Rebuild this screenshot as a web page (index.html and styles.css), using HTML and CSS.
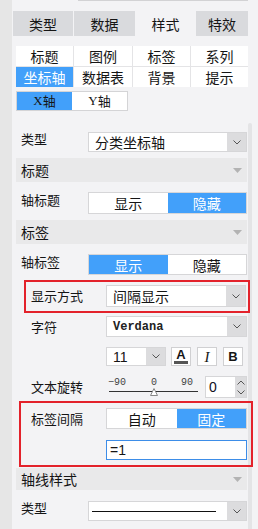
FILE: index.html
```html
<!DOCTYPE html>
<html>
<head>
    <meta charset="UTF-8">
    <title>样式</title>
    <link rel="stylesheet" href="styles.css">
</head>
<body>
<div class="app">
    <div class="side"></div>
    <div class="panel">
        <div class="scrollbar"></div>
        <div class="topline"></div>

        <div class="tabs">
            <div class="tab">类型</div>
            <div class="tab">数据</div>
            <div class="tab active">样式</div>
            <div class="tab">特效</div>
        </div>

        <div class="subtabs">
            <div class="sub">标题</div>
            <div class="sub">图例</div>
            <div class="sub">标签</div>
            <div class="sub">系列</div>
            <div class="sub on">坐标轴</div>
            <div class="sub">数据表</div>
            <div class="sub">背景</div>
            <div class="sub">提示</div>
        </div>

        <div class="axis">
            <div class="seg on"><span class="lat">X</span>轴</div>
            <div class="seg"><span class="lat">Y</span>轴</div>
        </div>

        <div class="row r-type">
            <div class="label">类型</div>
            <div class="select">
                <div class="val">分类坐标轴</div>
                <div class="arr"><svg width="8" height="5" viewBox="0 0 8 5"><path d="M0.5 0.5 L4 4 L7.5 0.5" fill="none" stroke="#555" stroke-width="1"/></svg></div>
            </div>
        </div>

        <div class="sec s-title">
            <span>标题</span>
            <svg width="9" height="5" viewBox="0 0 9 5"><path d="M0 0 H9 L4.5 5 Z" fill="#b3b3b3"/></svg>
        </div>

        <div class="row r-axtitle">
            <div class="label">轴标题</div>
            <div class="toggle">
                <div>显示</div>
                <div class="on">隐藏</div>
            </div>
        </div>

        <div class="sec s-label">
            <span>标签</span>
            <svg width="9" height="5" viewBox="0 0 9 5"><path d="M0 0 H9 L4.5 5 Z" fill="#b3b3b3"/></svg>
        </div>

        <div class="row r-axlabel">
            <div class="label">轴标签</div>
            <div class="toggle">
                <div class="on">显示</div>
                <div>隐藏</div>
            </div>
        </div>

        <div class="mark mark-1">
            <div class="row ind">
                <div class="label">显示方式</div>
                <div class="select">
                    <div class="val">间隔显示</div>
                    <div class="arr"><svg width="8" height="5" viewBox="0 0 8 5"><path d="M0.5 0.5 L4 4 L7.5 0.5" fill="none" stroke="#555" stroke-width="1"/></svg></div>
                </div>
            </div>
        </div>

        <div class="row ind out r-font">
            <div class="label">字符</div>
            <div class="select">
                <div class="val mono">Verdana</div>
                <div class="arr"><svg width="8" height="5" viewBox="0 0 8 5"><path d="M0.5 0.5 L4 4 L7.5 0.5" fill="none" stroke="#555" stroke-width="1"/></svg></div>
            </div>
        </div>

        <div class="fontrow">
            <div class="select size">
                <div class="val lat2">11</div>
                <div class="arr"><svg width="8" height="5" viewBox="0 0 8 5"><path d="M0.5 0.5 L4 4 L7.5 0.5" fill="none" stroke="#555" stroke-width="1"/></svg></div>
            </div>
            <div class="btn b-color"><span>A</span><i class="bar"></i></div>
            <div class="btn b-italic">I</div>
            <div class="btn b-bold">B</div>
        </div>

        <div class="row ind out r-rotate">
            <div class="label">文本旋转</div>
            <svg class="slider" width="95" height="22" viewBox="0 0 95 22">
                <text x="2" y="9" class="tick">−90</text>
                <text x="45" y="9" class="tick">0</text>
                <text x="75" y="9" class="tick">90</text>
                <line x1="3" y1="15.5" x2="92" y2="15.5" stroke="#333" stroke-width="1"/>
                <path d="M44.5 19.5 L48 12.5 L51.5 19.5 Z" fill="#fff" stroke="#888" stroke-width="1"/>
            </svg>
            <div class="spin">
                <div class="num">0</div>
                <div class="arrows">
                    <svg width="8" height="5" viewBox="0 0 8 5"><path d="M0.5 4.5 L4 1 L7.5 4.5" fill="none" stroke="#555" stroke-width="1"/></svg>
                    <svg width="8" height="5" viewBox="0 0 8 5"><path d="M0.5 0.5 L4 4 L7.5 0.5" fill="none" stroke="#555" stroke-width="1"/></svg>
                </div>
            </div>
        </div>

        <div class="mark mark-2">
            <div class="row ind">
                <div class="label">标签间隔</div>
                <div class="toggle">
                    <div>自动</div>
                    <div class="on">固定</div>
                </div>
            </div>
            <div class="formula">=1</div>
        </div>

        <div class="sec s-line">
            <span>轴线样式</span>
            <svg width="9" height="5" viewBox="0 0 9 5"><path d="M0 0 H9 L4.5 5 Z" fill="#b3b3b3"/></svg>
        </div>

        <div class="row r-linetype">
            <div class="label">类型</div>
            <div class="select">
                <div class="val"><i class="solid"></i></div>
                <div class="arr"><svg width="8" height="5" viewBox="0 0 8 5"><path d="M0.5 0.5 L4 4 L7.5 0.5" fill="none" stroke="#555" stroke-width="1"/></svg></div>
            </div>
        </div>
    </div>
</div>
</body>
</html>
```

FILE: styles.css
```css
* {
    box-sizing: border-box;
}
body {
    margin: 0;
    width: 258px;
    height: 529px;
    overflow: hidden;
    background: #f3f3f5;
    font-family: "Noto Sans CJK SC", "Noto Sans", sans-serif;
    font-size: 13px;
    line-height: 16px;
    color: #151515;
}
.app {
    display: flex;
    height: 529px;
}
.side {
    width: 12px;
    flex: none;
    background: #e6e6e6;
}
.panel {
    flex: 1;
    position: relative;
    padding: 0 10px 0 4px;
}
.scrollbar {
    position: absolute;
    left: 236px;
    top: 123px;
    width: 4px;
    bottom: 0;
    background: #e4e4e6;
    border-radius: 2px 2px 0 0;
}
.topline {
    height: 1px;
    margin-left: 62px;
    background: #d2d2d4;
}

/* top tabs */
.tabs {
    display: grid;
    grid-template-columns: 60px 61px 59px 52px;
    gap: 1px;
    height: 25px;
    margin: 10px 0 0 -3px;
}
.tab {
    display: flex;
    align-items: center;
    justify-content: center;
    background: #d9dadd;
    font-size: 14px;
}
.tab.active {
    background: #f3f3f5;
}

/* sub tabs */
.subtabs {
    display: grid;
    grid-template-columns: 57px 58px 57px 57px;
    grid-auto-rows: 20px;
    gap: 1px;
    margin-top: 10px;
    background: #e4e4e6;
}
.sub {
    display: flex;
    align-items: center;
    justify-content: center;
    background: #fff;
    font-size: 14px;
}
.sub.on {
    background: #42a0fa;
    color: #fff;
}

.axis {
    display: flex;
    width: 112px;
    height: 20px;
    margin-top: 4px;
    border: 1px solid #d4d4d6;
    background: #fff;
}
.axis .seg {
    flex: 1;
    display: flex;
    align-items: center;
    justify-content: center;
}
.axis .seg.on {
    background: #42a0fa;
}
.lat {
    font-family: "Liberation Serif", serif;
}

/* rows */
.row {
    display: flex;
    align-items: center;
    margin-right: 1px;
}
.row .label {
    width: 72px;
    flex: none;
    line-height: 14px;
    padding-left: 5px;
    padding-bottom: 6px;
}
.row.ind .label {
    width: 75px;
    padding-left: 0;
    padding-bottom: 0;
}
.row.ind.out {
    padding-left: 15px;
}
.select {
    flex: 1;
    display: flex;
    height: 20px;
    background: #fff;
    border: 1px solid #d6d6d8;
}
.select .val {
    flex: 1;
    display: flex;
    align-items: center;
    padding-left: 6px;
    font-size: 14px;
}
.select .arr {
    width: 19px;
    display: flex;
    align-items: center;
    justify-content: center;
    background: #dcdcde;
}
.toggle {
    flex: 1;
    display: flex;
    height: 22px;
    background: #fff;
    border: 1px solid #d6d6d8;
}
.toggle div {
    flex: 1;
    display: flex;
    align-items: center;
    justify-content: center;
    font-size: 14px;
}
.toggle .on {
    background: #42a0fa;
    color: #fff;
}
.sec {
    display: flex;
    align-items: center;
    justify-content: space-between;
    height: 24px;
    margin-right: 1px;
    padding: 0 5px 0 5px;
    background: #e9e9ea;
    font-size: 14px;
}

.r-type { margin-top: 21px; }
.s-title { margin-top: 6px; }
.r-axtitle { margin-top: 10px; }
.s-label { margin-top: 6px; }
.r-axlabel { margin-top: 10px; }
.r-axlabel .toggle { height: 21px; }

/* highlighted frames */
.mark {
    position: relative;
    border: 2px solid #e3222b;
}
.mark-1 {
    margin: 5px -2px 0 8px;
    padding: 3px 1px 4px 5px;
}
.mark-1 .select { height: 22px; }
.mark-2 {
    margin: 3px -5px 0 3px;
    padding: 5px 4px 5px 10px;
}
.mark-2 .row { margin-right: 0; }
.mark-2 .toggle { height: 21px; }
.formula {
    height: 20px;
    margin: 11px 0 0 75px;
    padding-left: 3px;
    display: flex;
    align-items: center;
    background: #fff;
    border: 1px solid #3d8de8;
    font-family: "Liberation Sans", sans-serif;
    font-size: 14px;
}

.r-font { margin-top: 3px; }
.r-font .select { height: 21px; }
.mono {
    font-family: "Liberation Mono", monospace;
    font-weight: bold;
    font-size: 12px !important;
    color: #222;
}

.fontrow {
    display: flex;
    height: 19px;
    margin-top: 10px;
    padding-left: 90px;
}
.select.size {
    flex: none;
    width: 60px;
    height: 19px;
}
.lat2 {
    font-family: "Liberation Sans", sans-serif;
}
.btn {
    width: 20px;
    height: 19px;
    margin-left: 5px;
    display: flex;
    align-items: center;
    justify-content: center;
    background: #fff;
    border: 1px solid #d0d0d2;
}
.b-color {
    flex-direction: column;
    font-family: "Liberation Sans", sans-serif;
    font-weight: bold;
    font-size: 13px;
    line-height: 12px;
}
.b-color .bar {
    display: block;
    width: 14px;
    height: 3px;
    background: #555;
}
.b-italic {
    margin-left: 6px;
    font-family: "Liberation Serif", serif;
    font-style: italic;
    font-size: 15px;
}
.b-bold {
    margin-left: 6px;
    font-family: "Liberation Sans", sans-serif;
    font-weight: bold;
    font-size: 13px;
}

.r-rotate {
    margin-top: 10px;
    height: 22px;
}
.slider {
    flex: none;
}
.tick {
    font-family: "Liberation Mono", monospace;
    font-size: 10px;
    fill: #444;
}
.spin {
    flex: none;
    width: 42px;
    height: 22px;
    margin-left: 4px;
    display: flex;
    border: 1px solid #d6d6d8;
    background: #fff;
}
.spin .num {
    flex: 1;
    padding-left: 3px;
    display: flex;
    align-items: center;
    font-family: "Liberation Sans", sans-serif;
    font-size: 14px;
    color: #112;
}
.spin .arrows {
    width: 11px;
    display: flex;
    flex-direction: column;
    align-items: center;
    justify-content: space-around;
    background: #dcdcde;
}

.s-line {
    margin-top: 1px;
    height: 22px;
}
.r-linetype { margin-top: 11px; }
.solid {
    display: block;
    width: 124px;
    height: 1px;
    margin-left: -3px;
    background: #111;
}
```
